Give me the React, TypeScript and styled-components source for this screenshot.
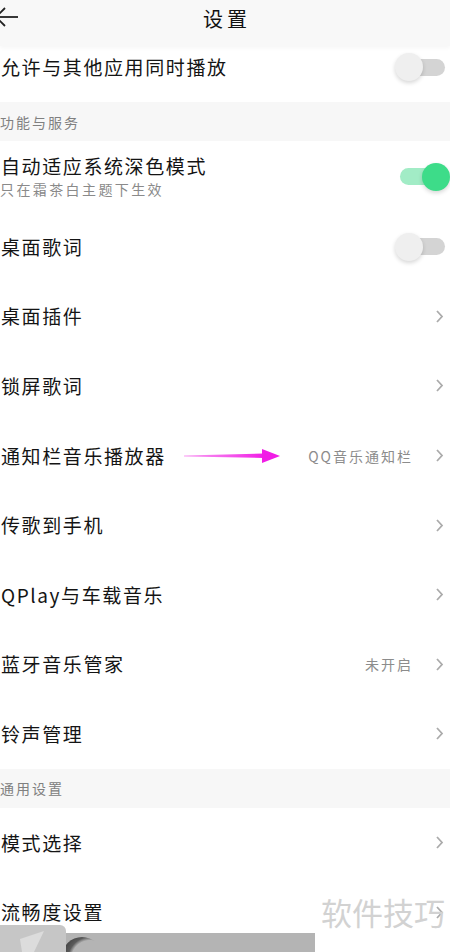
import styled, { createGlobalStyle } from "styled-components";

const GlobalStyle = createGlobalStyle`
  html, body {
    margin: 0;
    padding: 0;
    background: #ffffff;
  }
  body {
    font-family: "Noto Sans CJK SC", "Noto Sans", sans-serif;
  }
`;

const Page = styled.div`
  position: relative;
  width: 450px;
  height: 952px;
  overflow: hidden;
  background: #ffffff;
`;

const Header = styled.div`
  position: relative;
  z-index: 2;
  height: 46px;
  background: #f8f8f8;
  display: flex;
  align-items: center;
  justify-content: center;
  box-shadow: 0 2px 4px rgba(0, 0, 0, 0.04);
`;

const BackButton = styled.div`
  position: absolute;
  left: -6px;
  top: 6px;
  width: 26px;
  height: 24px;
`;

const Title = styled.div`
  font-size: 20px;
  letter-spacing: 4px;
  color: #111;
  margin-top: -10px;
  padding-left: 4px;
`;

const List = styled.div`
  margin-top: -14px;
  display: flex;
  flex-direction: column;
`;

const Row = styled.div<{ $h?: number }>`
  height: ${({ $h }) => $h ?? 69.6}px;
  display: flex;
  align-items: center;
  background: #ffffff;
  padding-right: 6px;
`;

const RowText = styled.div`
  flex: 1;
  display: flex;
  flex-direction: column;
  min-width: 0;
`;

const Label = styled.div`
  font-size: 19px;
  letter-spacing: 1.6px;
  color: #141414;
  line-height: 24px;
  padding-left: 1px;
`;

const SubLabel = styled.div`
  font-size: 14px;
  letter-spacing: 2.4px;
  color: #8a8a8a;
  line-height: 20px;
  margin-top: 1px;
`;

const Value = styled.div`
  font-size: 14px;
  letter-spacing: 2px;
  color: #8c8c8c;
  margin-right: 22px;
`;

const Section = styled.div`
  height: 39px;
  background: #f7f7f7;
  display: flex;
  align-items: center;
  font-size: 14px;
  letter-spacing: 2px;
  color: #808080;
`;

const Switch = styled.div`
  position: relative;
  width: 54px;
  height: 30px;
  margin-right: -5px;
  display: flex;
  align-items: center;
`;

const Track = styled.div<{ $on?: boolean }>`
  position: absolute;
  left: ${({ $on }) => ($on ? "5px" : "8px")};
  right: ${({ $on }) => ($on ? "9px" : "4px")};
  height: 17px;
  border-radius: 9px;
  background: ${({ $on }) => ($on ? "#a2ecc6" : "#d4d4d4")};
`;

const Knob = styled.div<{ $on?: boolean }>`
  position: absolute;
  ${({ $on }) => ($on ? "right: -1px;" : "left: 0;")}
  width: 28px;
  height: 28px;
  border-radius: 50%;
  background: ${({ $on }) => ($on ? "#3ddc89" : "#efefef")};
  box-shadow: 0 2px 4px rgba(0, 0, 0, 0.16);
`;

const Chevron = styled.svg`
  width: 9px;
  height: 15px;
  flex: none;
  margin-right: 0;
`;

const Pointer = styled.svg`
  position: absolute;
  left: 184px;
  top: 447px;
  width: 98px;
  height: 18px;
`;

const Watermark = styled.div`
  position: absolute;
  right: 5px;
  bottom: 18px;
  font-family: "Noto Sans CJK SC", sans-serif;
  font-size: 31px;
  color: #d2d2d2;
`;

const BottomBar = styled.div`
  position: absolute;
  left: 0;
  bottom: 0;
  width: 315px;
  height: 19px;
  background: #b4b4b4;
  overflow: hidden;
`;

const BottomDisc = styled.div`
  position: absolute;
  left: 62px;
  top: 4px;
  width: 40px;
  height: 40px;
  border-radius: 50%;
  background: radial-gradient(circle at 70% 55%, #b4b4b4 0 52%, #5a5a5a 62%, #2e2e2e 100%);
`;

const BottomTab = styled.div`
  position: absolute;
  left: 0;
  bottom: 0;
  width: 66px;
  height: 27px;
  border-top-right-radius: 6px;
  background: #c6c6c6;
  overflow: hidden;
`;

const Arrow = () => (
  <Chevron viewBox="0 0 9 15">
    <polyline points="2,2 7,7.5 2,13" fill="none" stroke="#ababab" strokeWidth="1.8" />
  </Chevron>
);

const Toggle = ({ on }: { on?: boolean }) => (
  <Switch>
    <Track $on={on} />
    <Knob $on={on} />
  </Switch>
);

type Item = {
  label: string;
  value?: string;
  kind: "arrow" | "off" | "on";
};

const group1: Item[] = [
  { label: "桌面歌词", kind: "off" },
  { label: "桌面插件", kind: "arrow" },
  { label: "锁屏歌词", kind: "arrow" },
  { label: "通知栏音乐播放器", value: "QQ音乐通知栏", kind: "arrow" },
  { label: "传歌到手机", kind: "arrow" },
  { label: "QPlay与车载音乐", kind: "arrow" },
  { label: "蓝牙音乐管家", value: "未开启", kind: "arrow" },
  { label: "铃声管理", kind: "arrow" },
];

const group2: Item[] = [
  { label: "模式选择", kind: "arrow" },
  { label: "流畅度设置", kind: "arrow" },
];

function SettingRow({ item }: { item: Item }) {
  return (
    <Row>
      <RowText>
        <Label>{item.label}</Label>
      </RowText>
      {item.value && <Value>{item.value}</Value>}
      {item.kind === "arrow" && <Arrow />}
      {item.kind === "off" && <Toggle />}
      {item.kind === "on" && <Toggle on />}
    </Row>
  );
}

export default function App() {
  return (
    <Page>
      <GlobalStyle />
      <Header>
        <BackButton>
          <svg width="26" height="24" viewBox="0 0 26 24">
            <line x1="2" y1="11" x2="24" y2="11" stroke="#222" strokeWidth="1.8" />
            <polyline points="11,2 2,11 11,20" fill="none" stroke="#222" strokeWidth="1.8" />
          </svg>
        </BackButton>
        <Title>设置</Title>
      </Header>
      <List>
        <Row $h={70}>
          <RowText>
            <Label>允许与其他应用同时播放</Label>
          </RowText>
          <Toggle />
        </Row>
        <Section>功能与服务</Section>
        <Row $h={71}>
          <RowText>
            <Label>自动适应系统深色模式</Label>
            <SubLabel>只在霜茶白主题下生效</SubLabel>
          </RowText>
          <Toggle on />
        </Row>
        {group1.map((item) => (
          <SettingRow item={item} key={item.label} />
        ))}
        <Section>通用设置</Section>
        {group2.map((item) => (
          <SettingRow item={item} key={item.label} />
        ))}
      </List>
      <Pointer viewBox="0 0 98 18">
        <defs>
          <linearGradient id="tail" x1="0" x2="1" y1="0" y2="0">
            <stop offset="0" stopColor="#f23ee6" stopOpacity="0.5" />
            <stop offset="1" stopColor="#f11de6" />
          </linearGradient>
        </defs>
        <polygon points="0,8.6 80,6.6 80,11 0,9.4" fill="url(#tail)" />
        <polygon points="78,2 96,9 78,16" fill="#f11de6" />
      </Pointer>
      <Watermark>软件技巧</Watermark>
      <BottomBar>
        <BottomDisc />
      </BottomBar>
      <BottomTab>
        <svg width="66" height="27" viewBox="0 0 66 27">
          <path d="M20 14 L44 6 L34 27 L22 27 Z" fill="#dcdcdc" />
        </svg>
      </BottomTab>
    </Page>
  );
}
